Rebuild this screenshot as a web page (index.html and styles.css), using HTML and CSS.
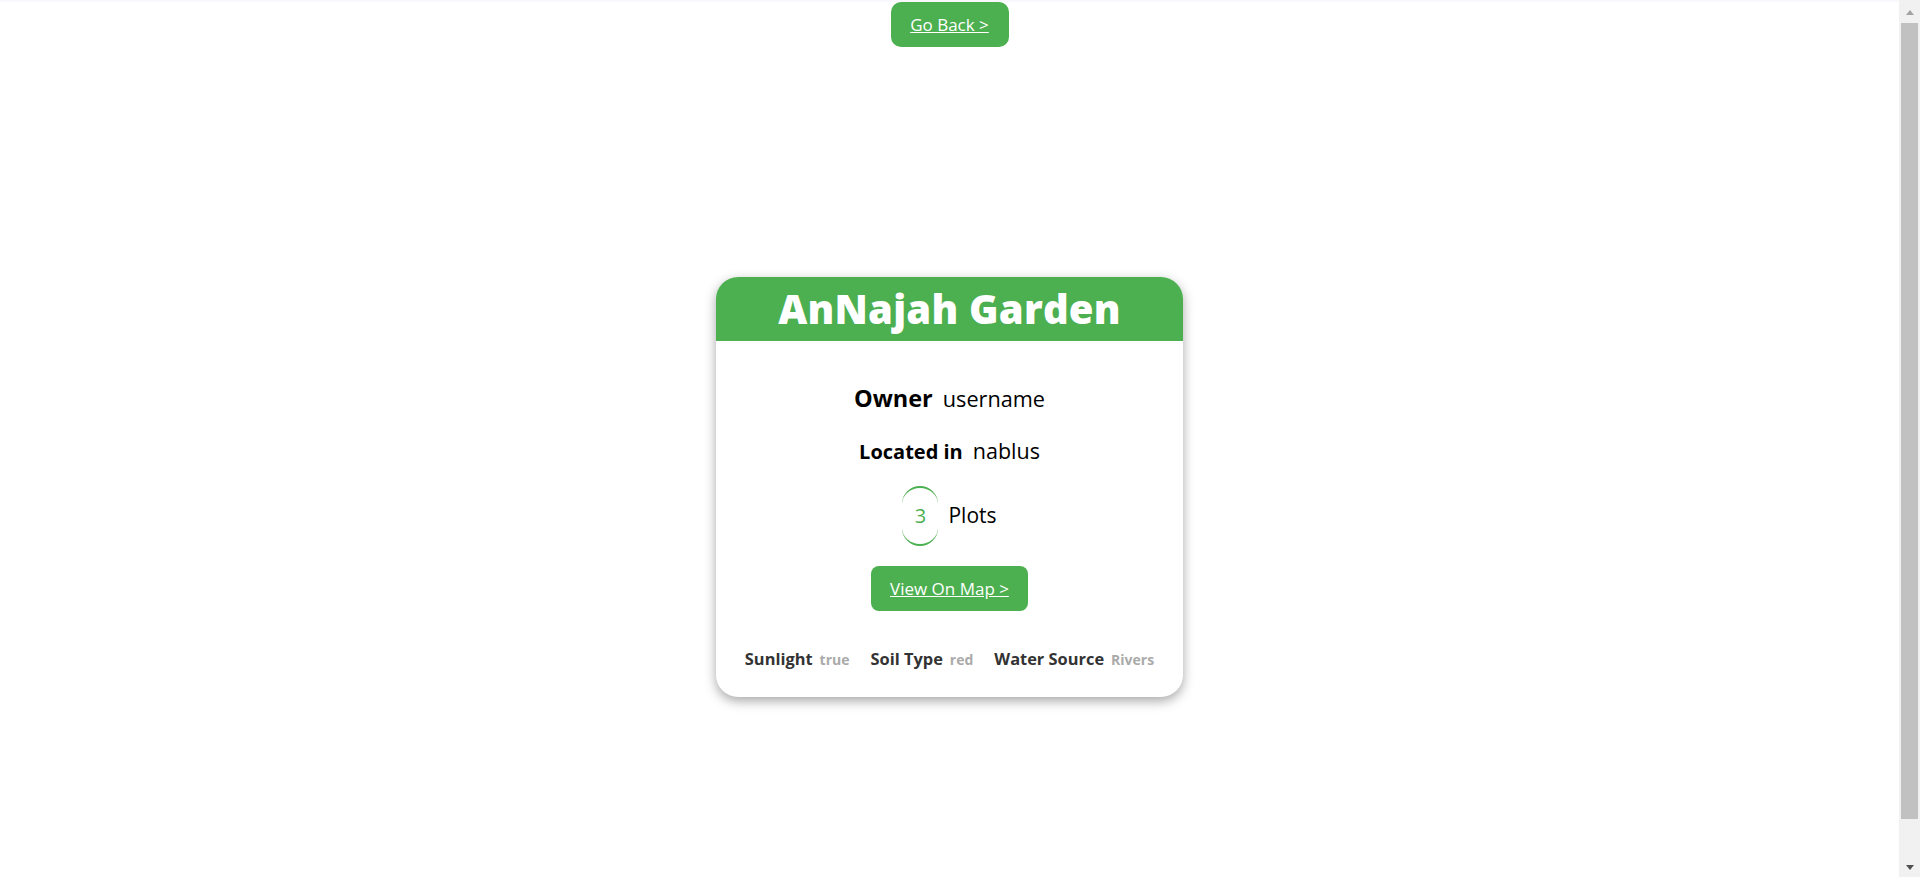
FILE: index.html
```html
<!DOCTYPE html>
<html lang="en">
<head>
<meta charset="utf-8">
<title>AnNajah Garden</title>
<link rel="stylesheet" href="styles.css">
</head>
<body>
<div class="viewport">
  <div class="topbar"></div>
  <nav class="top">
    <a class="btn btn-back" href="#">Go Back &gt;</a>
  </nav>
  <main class="stage">
    <section class="card">
      <header class="card-head">
        <h1 class="card-title">AnNajah Garden</h1>
      </header>
      <div class="card-body">
        <p class="row row-owner"><span class="label">Owner</span><span class="value">username</span></p>
        <p class="row row-loc"><span class="label">Located in</span><span class="value">nablus</span></p>
        <div class="row row-plots"><span class="plot-count">3</span><span class="plot-label">Plots</span></div>
        <a class="btn btn-map" href="#">View On Map &gt;</a>
        <div class="facts">
          <span class="fact"><b class="fact-label">Sunlight</b><span class="fact-value">true</span></span>
          <span class="fact"><b class="fact-label">Soil Type</b><span class="fact-value">red</span></span>
          <span class="fact"><b class="fact-label">Water Source</b><span class="fact-value">Rivers</span></span>
        </div>
      </div>
    </section>
  </main>
</div>
<div class="scrollbar" aria-hidden="true">
  <div class="sb-btn"><span class="arrow arrow-up"></span></div>
  <div class="sb-track"><div class="sb-thumb"></div></div>
  <div class="sb-btn"><span class="arrow arrow-down"></span></div>
</div>
</body>
</html>
```
FILE: styles.css
```css
html, body {
  margin: 0;
  padding: 0;
}
html {
  overflow: hidden;
}
body {
  height: 877px;
  display: flex;
  overflow: hidden;
  font-family: "Open Sans", "Liberation Sans", sans-serif;
  background: #fff;
  color: #000;
}
.viewport {
  flex: 1;
  min-width: 0;
  overflow: hidden;
}
.topbar {
  height: 2px;
  background: #f8f8fd;
}
.top {
  display: flex;
  justify-content: center;
}
.btn {
  display: inline-flex;
  align-items: center;
  justify-content: center;
  background: #4caf50;
  color: #fff;
  text-decoration: underline;
  font-size: 17px;
  font-weight: 400;
}
.btn-back {
  width: 118px;
  height: 45px;
  border-radius: 10px;
}
.stage {
  height: 877px;
  display: flex;
  align-items: center;
  justify-content: center;
  padding-top: 3px;
  box-sizing: border-box;
}
.card {
  width: 467px;
  height: 420px;
  flex-shrink: 0;
  border-radius: 22px;
  background: #fff;
  box-shadow: 0 4px 12px rgba(0, 0, 0, 0.35);
  overflow: hidden;
  display: flex;
  flex-direction: column;
}
.card-head {
  height: 64px;
  flex-shrink: 0;
  background: #4caf50;
  display: flex;
  align-items: center;
  justify-content: center;
}
.card-title {
  margin: 0;
  color: #fff;
  font-size: 40px;
  font-weight: 800;
  letter-spacing: 0.2px;
  line-height: 1;
}
.card-body {
  display: flex;
  flex-direction: column;
  align-items: center;
  padding-top: 46px;
}
.row {
  margin: 0;
  display: flex;
  align-items: baseline;
  gap: 10px;
  line-height: 1;
}
.row-owner .label { font-size: 23.5px; font-weight: 700; }
.row-owner .value { font-size: 21.7px; font-weight: 400; }
.row-loc { margin-top: 29px; }
.row-loc .label { font-size: 20px; font-weight: 700; }
.row-loc .value { font-size: 21.5px; font-weight: 400; }
.row-plots {
  margin-top: 24px;
  align-items: center;
  gap: 10px;
}
.plot-count {
  width: 36px;
  height: 60px;
  box-sizing: border-box;
  border: 2px solid #4caf50;
  border-left-width: 0;
  border-right-width: 0;
  border-radius: 999px;
  color: #4caf50;
  font-size: 20px;
  display: flex;
  align-items: center;
  justify-content: center;
}
.plot-label { font-size: 21px; }
.btn-map {
  margin-top: 20px;
  width: 157px;
  height: 45px;
  border-radius: 8px;
}
.facts {
  margin-top: 40px;
  display: flex;
  gap: 21px;
  line-height: 1;
}
.fact {
  display: flex;
  align-items: baseline;
  gap: 7px;
}
.fact-label {
  color: #333;
  font-size: 16.4px;
  font-weight: 700;
}
.fact-value {
  color: #aaa;
  font-size: 14px;
  font-weight: 700;
}

/* window scrollbar as seen in the capture */
.scrollbar {
  width: 21px;
  flex-shrink: 0;
  height: 877px;
  background: #f1f1f1;
  display: flex;
  flex-direction: column;
}
.sb-btn {
  height: 21px;
  flex-shrink: 0;
  display: flex;
  align-items: center;
  justify-content: center;
}
.sb-track {
  flex: 1;
  padding: 2px 2px 0;
}
.sb-thumb {
  height: 796px;
  background: #c1c1c1;
}
.arrow {
  width: 0;
  height: 0;
  border-left: 4.5px solid transparent;
  border-right: 4.5px solid transparent;
}
.arrow-up {
  border-bottom: 5px solid #a3a3a3;
  margin-top: 3px;
}
.arrow-down {
  border-top: 5px solid #505050;
  margin-bottom: -1px;
}
```
